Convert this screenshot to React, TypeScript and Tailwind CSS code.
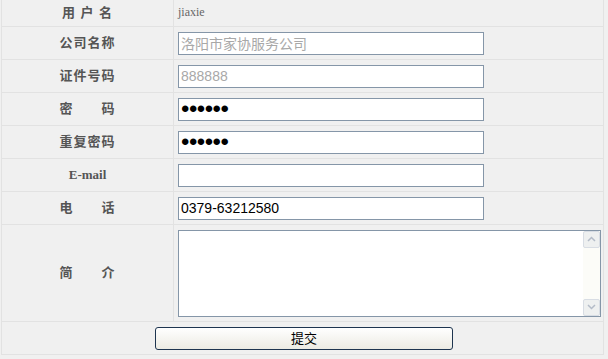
import React from "react";

const labelCls =
  "w-[172px] shrink-0 flex items-center justify-center border-r border-[#e2e2e2] text-[13px] font-bold text-[#555]";
const boxCls =
  "w-[306px] h-[23px] border border-[#8596a8] bg-white px-[2px] outline-none";
const inputCls = boxCls + " text-[14px]";
const passCls = boxCls + " text-[24px] leading-none text-black tracking-[-0.5px]";

function Row({
  label,
  height,
  children,
  serif,
}: {
  label: string;
  height: string;
  children: React.ReactNode;
  serif?: boolean;
}) {
  return (
    <div className={`flex border-b border-[#e2e2e2] ${height}`}>
      <div
        className={labelCls + (serif ? "" : " tracking-[1px]")}
        style={serif ? { fontFamily: "'Liberation Serif', serif" } : undefined}
      >
        {label}
      </div>
      <div className="flex-1 flex items-center pl-[4px]">{children}</div>
    </div>
  );
}

function App() {
  return (
    <div
      className="w-[608px] h-[359px] bg-[#f0f0f0]"
      style={{ fontFamily: "'Liberation Sans', 'Noto Sans CJK SC', sans-serif" }}
    >
      <div className="w-[603px] border-l border-r border-[#e2e2e2] ml-[1px]">
        <Row label="用 户 名" height="h-[27px]">
          <span
            className="text-[12px] text-[#666] -mt-[2px]"
            style={{ fontFamily: "'Liberation Serif', serif" }}
          >
            jiaxie
          </span>
        </Row>
        <Row label="公司名称" height="h-[33px]">
          <input className={inputCls + " text-[#a8a8a8]"} defaultValue="洛阳市家协服务公司" />
        </Row>
        <Row label="证件号码" height="h-[33px]">
          <input className={inputCls + " text-[#a8a8a8]"} defaultValue="888888" />
        </Row>
        <Row label="密　　码" height="h-[33px]">
          <input type="password" className={passCls} defaultValue="123456" />
        </Row>
        <Row label="重复密码" height="h-[33px]">
          <input type="password" className={passCls} defaultValue="123456" />
        </Row>
        <Row label="E-mail" height="h-[33px]" serif>
          <input className={inputCls} defaultValue="" />
        </Row>
        <Row label="电　　话" height="h-[33px]">
          <input className={inputCls + " text-black"} defaultValue="0379-63212580" />
        </Row>
        <div className="flex border-b border-[#e2e2e2] h-[97px]">
          <div className={labelCls + " tracking-[1px]"}>简　　介</div>
          <div className="flex-1 flex items-center pl-[4px]">
            <div className="w-[423px] h-[87px] border border-[#8596a8] bg-white flex justify-end">
              <div className="w-[17px] bg-[#fcfcf8] flex flex-col justify-between">
                <div className="h-[17px] border border-[#d8dde4] rounded-[2px] bg-[#eef0f0] flex items-center justify-center">
                  <svg width="9" height="6" viewBox="0 0 9 6">
                    <path d="M1 5 L4.5 1.5 L8 5" fill="none" stroke="#b4bcc8" strokeWidth="1.5" />
                  </svg>
                </div>
                <div className="h-[17px] border border-[#d8dde4] rounded-[2px] bg-[#eef0f0] flex items-center justify-center">
                  <svg width="9" height="6" viewBox="0 0 9 6">
                    <path d="M1 1 L4.5 4.5 L8 1" fill="none" stroke="#b4bcc8" strokeWidth="1.5" />
                  </svg>
                </div>
              </div>
            </div>
          </div>
        </div>
        <div className="h-[33px] flex items-center border-b border-[#e2e2e2]">
          <button className="ml-[153px] w-[298px] h-[23px] border border-[#1e3550] rounded-[3px] bg-gradient-to-b from-white to-[#ecebe3] text-[13px] text-black leading-none">
            提交
          </button>
        </div>
      </div>
    </div>
  );
}

export default App;
